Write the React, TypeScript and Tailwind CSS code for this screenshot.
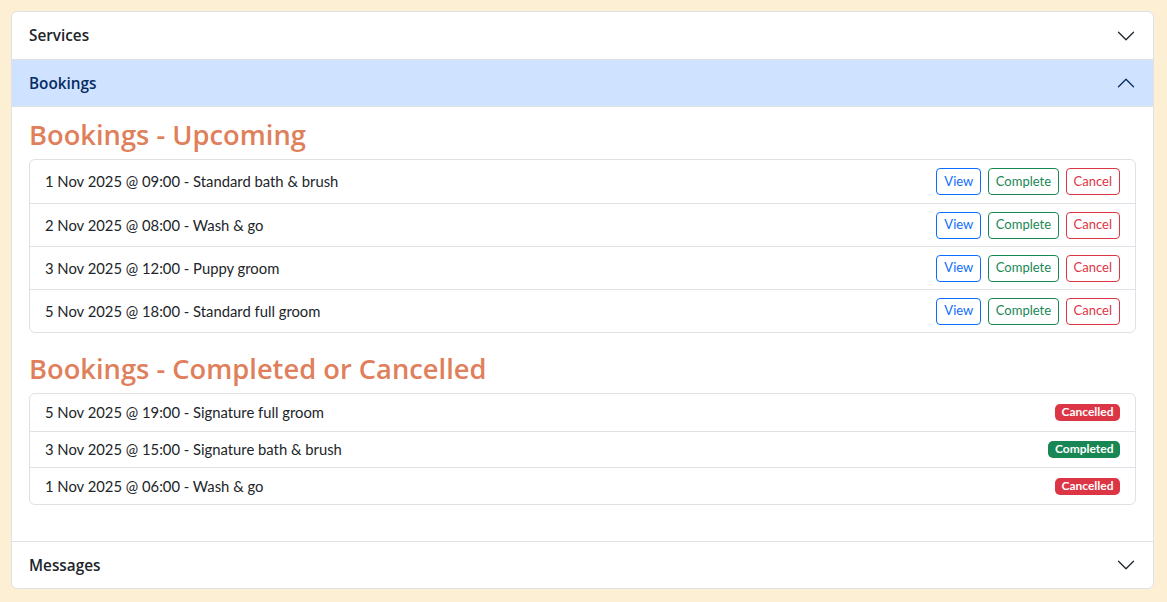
import React from 'react';

const upcoming = [
  '1 Nov 2025 @ 09:00 - Standard bath & brush',
  '2 Nov 2025 @ 08:00 - Wash & go',
  '3 Nov 2025 @ 12:00 - Puppy groom',
  '5 Nov 2025 @ 18:00 - Standard full groom',
];

const past = [
  { label: '5 Nov 2025 @ 19:00 - Signature full groom', status: 'Cancelled' },
  { label: '3 Nov 2025 @ 15:00 - Signature bath & brush', status: 'Completed' },
  { label: '1 Nov 2025 @ 06:00 - Wash & go', status: 'Cancelled' },
];

const heading = { fontFamily: '"Open Sans", sans-serif' };
const body = { fontFamily: 'Lato, "Noto Sans", sans-serif' };

const Chevron: React.FC<{ open?: boolean }> = ({ open }) => (
  <svg
    width="20"
    height="20"
    viewBox="0 0 16 16"
    className={open ? 'rotate-180' : ''}
    fill="none"
    stroke={open ? '#052c65' : '#212529'}
    strokeLinecap="round"
    strokeLinejoin="round"
  >
    <path d="M2 5L8 11L14 5" />
  </svg>
);

const Header: React.FC<{ title: string; open?: boolean; last?: boolean }> = ({ title, open, last }) => (
  <div
    className={`flex items-center justify-between pl-[17px] pr-[17px] ${
      open ? 'h-[47px] bg-[#cfe2ff] text-[#052c65] border-b border-[#dee2e6]' : 'h-[47px] text-[#212529]'
    } ${last ? 'border-t border-[#dee2e6] rounded-b-[6px]' : ''}`}
  >
    <span className="text-[15.3px] font-semibold" style={heading}>
      {title}
    </span>
    <Chevron open={open} />
  </div>
);

export default function App() {
  return (
    <div className="min-h-screen bg-[#fdefd4] pl-[11px] pt-[11px]" style={body}>
      <div className="w-[1143px] bg-white border border-[#dee2e6] rounded-[6px]">
        <div className="border-b border-[#dee2e6]">
          <Header title="Services" />
        </div>
        <Header title="Bookings" open />
        <div className="px-[17px] pt-[12px] pb-[36px]">
          <h3 className="text-[27.3px] leading-[32px] font-semibold text-[#e07f5c] mb-[8px]" style={heading}>
            Bookings - Upcoming
          </h3>
          <ul className="border border-[#dee2e6] rounded-[6px]">
            {upcoming.map((b, i) => (
              <li
                key={b}
                className={`h-[43px] flex items-center justify-between pl-[15px] pr-[15px] text-[14.8px] text-[#212529] ${
                  i > 0 ? 'border-t border-[#dee2e6]' : ''
                }`}
              >
                <span>{b}</span>
                <div className="flex gap-[7px] text-[13px]">
                  <button className="h-[27px] px-[7px] border border-[#0d6efd] text-[#0d6efd] rounded-[4px]">View</button>
                  <button className="h-[27px] px-[6.5px] border border-[#198754] text-[#198754] rounded-[4px]">Complete</button>
                  <button className="h-[27px] px-[7px] border border-[#dc3545] text-[#dc3545] rounded-[4px]">Cancel</button>
                </div>
              </li>
            ))}
          </ul>
          <h3 className="text-[27.3px] leading-[32px] font-semibold text-[#e07f5c] mt-[20px] mb-[8px]" style={heading}>
            Bookings - Completed or Cancelled
          </h3>
          <ul className="border border-[#dee2e6] rounded-[6px]">
            {past.map((b, i) => (
              <li
                key={b.label}
                className={`h-[36.67px] flex items-center justify-between pl-[15px] pr-[15px] text-[14.8px] text-[#212529] ${
                  i > 0 ? 'border-t border-[#dee2e6]' : ''
                }`}
              >
                <span>{b.label}</span>
                <span
                  className={`h-[17px] px-[6.5px] flex items-center rounded-[5px] text-white text-[12px] font-bold ${
                    b.status === 'Completed' ? 'bg-[#198754]' : 'bg-[#dc3545]'
                  }`}
                >
                  {b.status}
                </span>
              </li>
            ))}
          </ul>
        </div>
        <Header title="Messages" last />
      </div>
    </div>
  );
}
